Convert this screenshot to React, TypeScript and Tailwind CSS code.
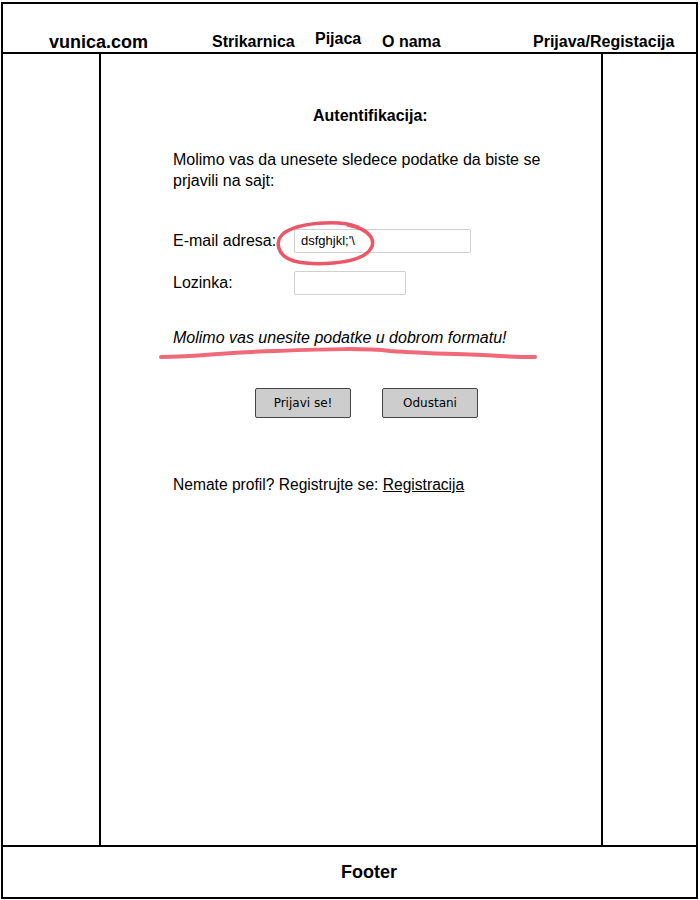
const font = "font-['Liberation_Sans',Arial,sans-serif]";

export default function App() {
  return (
    <div className={`relative w-[700px] h-[900px] bg-white text-black ${font}`}>
      <div className="ml-[1px] mt-[2px] w-[697px] h-[897px] border-2 border-black flex flex-col">
        {/* header */}
        <div className="h-[50px] shrink-0 border-b-2 border-black flex items-start pt-[28px] pl-[46px] font-bold">
          <span className="w-[163px] text-[18px] leading-[20px]">vunica.com</span>
          <span className="w-[103px] text-[16px] leading-[20px]">Strikarnica</span>
          <span className="w-[67px] text-[16px] leading-[20px] -mt-[3px]">Pijaca</span>
          <span className="w-[151px] text-[16px] leading-[20px]">O nama</span>
          <span className="text-[16px] leading-[20px]">Prijava/Registacija</span>
        </div>

        {/* main */}
        <div className="flex-1 flex">
          <div className="ml-[96px] w-[504px] border-x-2 border-black pl-[72px] flex flex-col items-start">
            <h1 className="mt-[52px] ml-[140px] text-[16px] leading-[20px] font-bold">Autentifikacija:</h1>
            <p className="mt-[23px] w-[380px] text-[16px] leading-[21px]">
              Molimo vas da unesete sledece podatke da biste se prjavili na sajt:
            </p>

            <div className="mt-[38px] flex items-center">
              <span className="w-[121px] text-[16px] leading-[20px]">E-mail adresa:</span>
              <div className="w-[177px] h-[24px] border border-[#cfcfcf] rounded-[2px] pl-[6px] flex items-center text-[13px]">
                dsfghjkl;'\
              </div>
            </div>
            <div className="mt-[18px] flex items-center">
              <span className="w-[121px] text-[16px] leading-[20px]">Lozinka:</span>
              <div className="w-[112px] h-[24px] border border-[#cfcfcf] rounded-[2px]" />
            </div>

            <p className="mt-[33px] text-[16px] leading-[20px] italic">
              Molimo vas unesite podatke u dobrom formatu!
            </p>

            <div className="mt-[40px] ml-[82px] flex gap-[31px]">
              <button className="w-[96px] h-[30px] bg-[#cdcdcd] border border-[#444] rounded-[2px] text-[12px] font-['Comic_Sans_MS','DejaVu_Sans',sans-serif]">
                Prijavi se!
              </button>
              <button className="w-[96px] h-[30px] bg-[#cdcdcd] border border-[#444] rounded-[2px] text-[12px] font-['Comic_Sans_MS','DejaVu_Sans',sans-serif]">
                Odustani
              </button>
            </div>

            <p className="mt-[57px] text-[15.6px] leading-[20px]">
              Nemate profil? Registrujte se: <a className="underline">Registracija</a>
            </p>
          </div>
        </div>

        {/* footer */}
        <div className="h-[52px] shrink-0 border-t-2 border-black flex items-center pl-[338px] pt-[1px]">
          <span className="text-[18px] font-bold">Footer</span>
        </div>
      </div>

      {/* red annotations */}
      <svg className="absolute inset-0 pointer-events-none" width="700" height="900">
        <path
          d="M358 225 C338 217 298 221 284 231 C274 239 277 254 294 259 C314 264 354 262 367 251 C378 241 373 228 348 223"
          fill="none"
          stroke="#e8394b"
          strokeOpacity="0.85"
          strokeWidth="3.5"
          strokeLinecap="round"
        />
        <path
          d="M161 355 C200 355 225 350 275 349 C330 347 365 346 390 349 C430 352 470 352 500 354 C515 355 525 355 535 355"
          fill="none"
          stroke="#ec4458"
          strokeOpacity="0.8"
          strokeWidth="4"
          strokeLinecap="round"
        />
      </svg>
    </div>
  );
}
